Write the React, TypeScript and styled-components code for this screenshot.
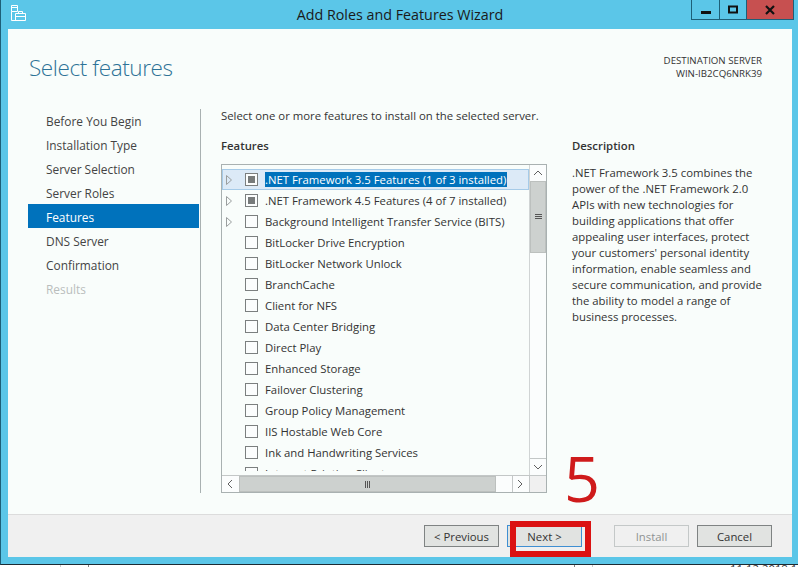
import React from 'react'
import styled, { createGlobalStyle } from 'styled-components'

const features: { label: string; state?: 'mixed'; expand?: boolean; selected?: boolean }[] = [
    { label: '.NET Framework 3.5 Features (1 of 3 installed)', state: 'mixed', expand: true, selected: true },
    { label: '.NET Framework 4.5 Features (4 of 7 installed)', state: 'mixed', expand: true },
    { label: 'Background Intelligent Transfer Service (BITS)', expand: true },
    { label: 'BitLocker Drive Encryption' },
    { label: 'BitLocker Network Unlock' },
    { label: 'BranchCache' },
    { label: 'Client for NFS' },
    { label: 'Data Center Bridging' },
    { label: 'Direct Play' },
    { label: 'Enhanced Storage' },
    { label: 'Failover Clustering' },
    { label: 'Group Policy Management' },
    { label: 'IIS Hostable Web Core' },
    { label: 'Ink and Handwriting Services' },
    { label: 'Internet Printing Client' },
]

const steps = ['Before You Begin', 'Installation Type', 'Server Selection', 'Server Roles', 'Features', 'DNS Server', 'Confirmation', 'Results']

const GlobalStyle = createGlobalStyle`
    html, body {
        margin : 0;
        padding : 0;
        background : #ffffff;
    }
    body {
        width : 798px;
        height : 567px;
        overflow : hidden;
        font-family : 'Open Sans', 'Noto Sans', sans-serif;
        font-size : 11.35px;
        color : #333333;
    }
`

const Window = styled.div`
    width : 798px;
    height : 565px;
    box-sizing : border-box;
    background : #5bc6e8;
    border-left : 1px solid #1d5f78;
    border-bottom : 1px solid #1c2b33;
    padding : 0 6px 7px 7px;
    display : flex;
    flex-direction : column;
`

const TitleBar = styled.div`
    height : 29px;
    flex-shrink : 0;
    display : flex;
    align-items : center;
    justify-content : center;
    position : relative;
    font-size : 14.3px;
    color : #1a1a1a;
`

const AppIcon = styled.svg`
    position : absolute;
    left : 2px;
    top : 5px;
`

const WindowButtons = styled.div`
    position : absolute;
    top : 0;
    right : -2px;
    height : 20px;
    box-sizing : border-box;
    display : flex;
    border : 1px solid #1d5f78;
    border-top : none;
`

const WindowButton = styled.div<{ $width: number; $close?: boolean }>`
    width : ${props => props.$width}px;
    display : flex;
    align-items : center;
    justify-content : center;
    background : ${props => (props.$close ? '#c75050' : 'transparent')};
    & + & {
        border-left : 1px solid #1d5f78;
    }
`

const Client = styled.div`
    flex : 1;
    display : flex;
    flex-direction : column;
    background : #f9fdfb;
    min-height : 0;
`

const Header = styled.div`
    height : 76px;
    flex-shrink : 0;
    display : flex;
    justify-content : space-between;
    padding : 19px 30px 0 21px;
    box-sizing : border-box;
`

const Title = styled.h1`
    margin : 0;
    font-size : 22.5px;
    font-weight : 300;
    letter-spacing : -0.4px;
    line-height : 40px;
    color : #2e7397;
`

const Server = styled.div`
    margin-top : 6px;
    text-align : right;
    font-size : 9.7px;
    line-height : 13px;
    color : #333333;
`

const Body = styled.div`
    flex : 1;
    display : flex;
    min-height : 0;
`

const Nav = styled.div`
    width : 171px;
    margin-left : 20px;
    padding-top : 3px;
    flex-shrink : 0;
    font-size : 11.9px;
`

const NavItem = styled.div<{ $active?: boolean; $disabled?: boolean }>`
    height : 24px;
    box-sizing : border-box;
    padding : 1px 0 0 18px;
    line-height : 24px;
    background : ${props => (props.$active ? '#0072bc' : 'transparent')};
    color : ${props => (props.$active ? '#ffffff' : props.$disabled ? '#b9bdbd' : '#444444')};
`

const Content = styled.div`
    margin : 4px 0 21px 1px;
    border-left : 1px solid #a9b1b1;
    padding-left : 20px;
    display : flex;
    flex-direction : column;
    flex : 1;
`

const Intro = styled.div`
    height : 24px;
    line-height : 14px;
    color : #333333;
`

const Columns = styled.div`
    display : flex;
    flex : 1;
    min-height : 0;
    margin-top : 6px;
`

const FeatureColumn = styled.div`
    width : 326px;
    display : flex;
    flex-direction : column;
`

const SectionTitle = styled.div`
    height : 25px;
    line-height : 14px;
    font-weight : 600;
    color : #333333;
`

const ListBox = styled.div`
    width : 326px;
    height : 329px;
    box-sizing : border-box;
    border : 1px solid #a9b1b1;
    display : grid;
    grid-template-columns : 1fr 17px;
    grid-template-rows : 1fr 17px;
`

const Rows = styled.div`
    overflow : hidden;
    min-height : 0;
    margin-bottom : 4px;
    padding-top : 4px;
`

const Row = styled.div<{ $selected?: boolean }>`
    height : 21px;
    box-sizing : border-box;
    display : flex;
    align-items : center;
    padding-left : 3px;
    background : ${props => (props.$selected ? '#dceaf7' : 'transparent')};
    border : 1px solid ${props => (props.$selected ? '#a6cbe8' : 'transparent')};
`

const Expander = styled.svg`
    width : 6px;
    height : 10px;
    margin-right : 13px;
    flex-shrink : 0;
`

const ExpanderSpace = styled.div`
    width : 19px;
    flex-shrink : 0;
`

const CheckBox = styled.div<{ $mixed?: boolean }>`
    width : 11px;
    height : 11px;
    flex-shrink : 0;
    margin-right : 7px;
    border : 1px solid #7b7f7f;
    display : flex;
    align-items : center;
    justify-content : center;
    background : #fbfdfd;
    &::after {
        content : '';
        display : ${props => (props.$mixed ? 'block' : 'none')};
        width : 7px;
        height : 7px;
        background : #777b7b;
    }
`

const RowLabel = styled.span<{ $selected?: boolean }>`
    padding : 1px 1px 0 0;
    line-height : 14px;
    white-space : nowrap;
    background : ${props => (props.$selected ? '#0072bc' : 'transparent')};
    color : ${props => (props.$selected ? '#ffffff' : '#333333')};
`

const VScroll = styled.div`
    display : flex;
    flex-direction : column;
    border-left : 1px solid #d0d4d4;
    background : #fbfdfd;
`

const ScrollEnd = styled.div<{ $bottom?: boolean }>`
    width : 100%;
    height : ${props => (props.$bottom ? '17px' : '16px')};
    flex-shrink : 0;
    display : flex;
    align-items : center;
    justify-content : center;
    box-sizing : border-box;
    border-top : ${props => (props.$bottom ? '1px solid #c3c7c7' : 'none')};
`

const VThumb = styled.div`
    height : 72px;
    background : #cdd1cf;
    border : 1px solid #bcc0be;
    box-sizing : border-box;
    display : flex;
    align-items : center;
    justify-content : center;
`

const VTrack = styled.div`
    flex : 1;
`

const HScroll = styled.div`
    display : flex;
    border-top : 1px solid #c3c7c7;
    background : #fbfdfd;
`

const HEnd = styled.div<{ $right?: boolean }>`
    width : 17px;
    flex-shrink : 0;
    box-sizing : border-box;
    display : flex;
    align-items : center;
    justify-content : center;
    border-left : ${props => (props.$right ? '1px solid #c3c7c7' : 'none')};
`

const HThumb = styled.div`
    width : 257px;
    background : #cdd1cf;
    border : 1px solid #bcc0be;
    box-sizing : border-box;
    display : flex;
    align-items : center;
    justify-content : center;
`

const HTrack = styled.div`
    flex : 1;
`

const Corner = styled.div`
    background : #f0f0f0;
    border-top : 1px solid #c3c7c7;
    border-left : 1px solid #c3c7c7;
`

const DescColumn = styled.div`
    margin-left : 25px;
    width : 200px;
`

const Description = styled.div`
    padding-top : 1px;
    line-height : 16px;
    color : #333333;
`

const Footer = styled.div`
    height : 43px;
    flex-shrink : 0;
    box-sizing : border-box;
    background : #f0f0f0;
    border-top : 1px solid #dcdcdc;
    display : flex;
    align-items : center;
    justify-content : flex-end;
    padding : 0 20px 0 0;
`

const Button = styled.div<{ $focus?: boolean; $disabled?: boolean; $gap?: number }>`
    width : 75px;
    height : 22px;
    box-sizing : border-box;
    margin-left : ${props => props.$gap ?? 0}px;
    display : flex;
    align-items : center;
    justify-content : center;
    background : ${props => (props.$disabled ? '#f0f0f0' : '#e1e3e1')};
    border : 1px solid ${props => (props.$focus ? '#3f8fd2' : props.$disabled ? '#c4c8c8' : '#7f8383')};
    color : ${props => (props.$disabled ? '#8f9393' : '#333333')};
`

const RedBox = styled.div`
    position : absolute;
    left : 510px;
    top : 521px;
    width : 81px;
    height : 36px;
    box-sizing : border-box;
    border : 6px solid #db1212;
`

const BigFive = styled.div`
    position : absolute;
    left : 564px;
    top : 438px;
    font-size : 63px;
    line-height : 80px;
    color : #cf1b1b;
`

const Desktop = styled.div`
    height : 2px;
    background : #ffffff;
    overflow : hidden;
    display : flex;
`

const DesktopTick = styled.div<{ $gap: number; $color: string }>`
    width : 1px;
    flex-shrink : 0;
    margin-left : ${props => props.$gap}px;
    background : ${props => props.$color};
`

const DesktopClock = styled.div`
    margin-left : auto;
    width : 68px;
    overflow : hidden;
    font-size : 11.35px;
    line-height : 8px;
    white-space : nowrap;
    color : #333333;
`

const Chevron = ({ dir }: { dir: 'up' | 'down' | 'left' | 'right' }) => {
    const points = {
        up: '1,6 5,2 9,6',
        down: '1,2 5,6 9,2',
        left: '6,0 2,4 6,8',
        right: '2,0 6,4 2,8',
    }[dir]
    return (
        <svg width='10' height='8' viewBox='0 0 10 8'>
            <polyline points={points} fill='none' stroke='#606060' strokeWidth='1' />
        </svg>
    )
}

export default function App() {
    return (
        <>
            <GlobalStyle />
            <Window>
                <TitleBar>
                    <AppIcon width='17' height='17' viewBox='0 0 17 17'>
                        <path d='M1.5 .5h6v6h-6zM1.5 2.5h6M1.5 6.5v9h5' fill='none' stroke='#ffffff' />
                        <path d='M5.5 8.5h10v7h-10zM8.5 8.5v-2h4v2M5.5 11.5h10' fill='none' stroke='#ffffff' />
                    </AppIcon>
                    Add Roles and Features Wizard
                    <WindowButtons>
                        <WindowButton $width={27}>
                            <svg width='10' height='10' viewBox='0 0 10 10'><rect x='0' y='6' width='10' height='3' fill='#111' /></svg>
                        </WindowButton>
                        <WindowButton $width={26}>
                            <svg width='10' height='10' viewBox='0 0 10 10'><rect x='1' y='1.5' width='8' height='6' fill='none' stroke='#111' strokeWidth='2' /></svg>
                        </WindowButton>
                        <WindowButton $width={46} $close>
                            <svg width='10' height='10' viewBox='0 0 10 10'><path d='M1 1l8 8M9 1l-8 8' stroke='#111' strokeWidth='2.2' /></svg>
                        </WindowButton>
                    </WindowButtons>
                </TitleBar>
                <Client>
                    <Header>
                        <Title>Select features</Title>
                        <Server>
                            <div>DESTINATION SERVER</div>
                            <div>WIN-IB2CQ6NRK39</div>
                        </Server>
                    </Header>
                    <Body>
                        <Nav>
                            {steps.map(s => (
                                <NavItem key={s} $active={s === 'Features'} $disabled={s === 'Results'}>{s}</NavItem>
                            ))}
                        </Nav>
                        <Content>
                            <Intro>Select one or more features to install on the selected server.</Intro>
                            <Columns>
                                <FeatureColumn>
                                    <SectionTitle>Features</SectionTitle>
                                    <ListBox>
                                        <Rows>
                                            {features.map(f => (
                                                <Row key={f.label} $selected={f.selected}>
                                                    {f.expand ? (
                                                        <Expander viewBox='0 0 6 10'>
                                                            <path d='M.5 .5l5 4.5-5 4.5z' fill='none' stroke='#9a9e9e' />
                                                        </Expander>
                                                    ) : <ExpanderSpace />}
                                                    <CheckBox $mixed={f.state === 'mixed'} />
                                                    <RowLabel $selected={f.selected}>{f.label}</RowLabel>
                                                </Row>
                                            ))}
                                        </Rows>
                                        <VScroll>
                                            <ScrollEnd><Chevron dir='up' /></ScrollEnd>
                                            <VThumb>
                                                <svg width='7' height='6' viewBox='0 0 7 6'><path d='M0 .5h7M0 2.5h7M0 4.5h7' stroke='#555' /></svg>
                                            </VThumb>
                                            <VTrack />
                                            <ScrollEnd $bottom><Chevron dir='down' /></ScrollEnd>
                                        </VScroll>
                                        <HScroll>
                                            <HEnd><Chevron dir='left' /></HEnd>
                                            <HThumb>
                                                <svg width='6' height='7' viewBox='0 0 6 7'><path d='M.5 0v7M2.5 0v7M4.5 0v7' stroke='#555' /></svg>
                                            </HThumb>
                                            <HTrack />
                                            <HEnd $right><Chevron dir='right' /></HEnd>
                                        </HScroll>
                                        <Corner />
                                    </ListBox>
                                </FeatureColumn>
                                <DescColumn>
                                    <SectionTitle>Description</SectionTitle>
                                    <Description>
                                        .NET Framework 3.5 combines the<br />
                                        power of the .NET Framework 2.0<br />
                                        APIs with new technologies for<br />
                                        building applications that offer<br />
                                        appealing user interfaces, protect<br />
                                        your customers' personal identity<br />
                                        information, enable seamless and<br />
                                        secure communication, and provide<br />
                                        the ability to model a range of<br />
                                        business processes.
                                    </Description>
                                </DescColumn>
                            </Columns>
                        </Content>
                    </Body>
                    <Footer>
                        <Button>&lt; Previous</Button>
                        <Button $focus $gap={8}>Next &gt;</Button>
                        <Button $disabled $gap={32}>Install</Button>
                        <Button $gap={8}>Cancel</Button>
                    </Footer>
                </Client>
            </Window>
            <Desktop>
                <DesktopTick $gap={60} $color='#c8c8c8' />
                <DesktopTick $gap={27} $color='#808080' />
                <DesktopTick $gap={485} $color='#808080' />
                <DesktopTick $gap={17} $color='#c8c8c8' />
                <DesktopClock>11.12.2018 11:32</DesktopClock>
            </Desktop>
            <BigFive>5</BigFive>
            <RedBox />
        </>
    )
}
